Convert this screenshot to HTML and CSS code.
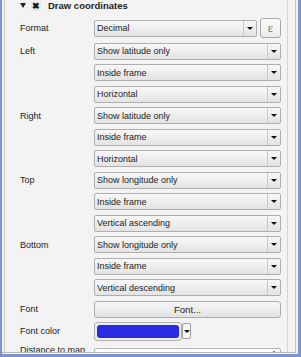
FILE: index.html
```html
<!DOCTYPE html>
<html lang="en">
<head>
    <meta charset="UTF-8">
    <title>Draw coordinates</title>
    <link rel="stylesheet" href="styles.css">
</head>
<body>
    <div class="window">
        <div class="viewport">
            <div class="group">
                <div class="group-header">
                    <span class="collapse-arrow"></span>
                    <span class="check">&#10006;</span>
                    <span class="group-title">Draw coordinates</span>
                </div>

                <div class="rows">
                    <label class="field-label">Format</label>
                    <div class="format-line">
                        <div class="combo short"><span class="combo-text">Decimal</span><span class="combo-arrow"></span></div>
                        <button class="expr-btn">ε</button>
                    </div>

                    <label class="field-label">Left</label>
                    <div class="combo"><span class="combo-text">Show latitude only</span><span class="combo-arrow"></span></div>
                    <span></span>
                    <div class="combo"><span class="combo-text">Inside frame</span><span class="combo-arrow"></span></div>
                    <span></span>
                    <div class="combo"><span class="combo-text">Horizontal</span><span class="combo-arrow"></span></div>

                    <label class="field-label">Right</label>
                    <div class="combo"><span class="combo-text">Show latitude only</span><span class="combo-arrow"></span></div>
                    <span></span>
                    <div class="combo"><span class="combo-text">Inside frame</span><span class="combo-arrow"></span></div>
                    <span></span>
                    <div class="combo"><span class="combo-text">Horizontal</span><span class="combo-arrow"></span></div>

                    <label class="field-label">Top</label>
                    <div class="combo"><span class="combo-text">Show longitude only</span><span class="combo-arrow"></span></div>
                    <span></span>
                    <div class="combo"><span class="combo-text">Inside frame</span><span class="combo-arrow"></span></div>
                    <span></span>
                    <div class="combo"><span class="combo-text">Vertical ascending</span><span class="combo-arrow"></span></div>

                    <label class="field-label">Bottom</label>
                    <div class="combo"><span class="combo-text">Show longitude only</span><span class="combo-arrow"></span></div>
                    <span></span>
                    <div class="combo"><span class="combo-text">Inside frame</span><span class="combo-arrow"></span></div>
                    <span></span>
                    <div class="combo"><span class="combo-text">Vertical descending</span><span class="combo-arrow"></span></div>

                    <label class="field-label">Font</label>
                    <button class="font-btn">Font...</button>

                    <label class="field-label">Font color</label>
                    <div class="color-line">
                        <div class="color-btn"><span class="swatch"></span></div>
                        <div class="color-drop"><span class="small-arrow"></span></div>
                    </div>

                    <label class="field-label last-label">Distance to map</label>
                    <div class="spinbox"><span class="spin-up"></span></div>
                </div>
            </div>
        </div>
    </div>
</body>
</html>
```

FILE: styles.css
```css
body {
    margin: 0;
    background: #f3f3f3;
    font-family: "Liberation Sans", Arial, sans-serif;
    font-size: 9px;
    color: #222;
}

.window {
    width: 301px;
    height: 357px;
    box-sizing: border-box;
    border: 2px solid #7896c8;
    border-top: none;
    border-right-width: 3px;
    border-bottom-width: 3px;
    background: #f3f3f3;
    overflow: hidden;
}

.viewport {
    width: 294px;
    height: 353px;
    box-sizing: border-box;
    border-right: 1px solid #c4c4c4;
    border-bottom: 1px solid #b8b8b8;
    overflow: hidden;
}

.group {
    margin-left: 2px;
    width: 284px;
    box-sizing: border-box;
    border-left: 1px solid #cacaca;
    border-right: 1px solid #d4d4d4;
    padding: 0 6px 20px 15px;
    min-height: 360px;
}

.group-header {
    display: flex;
    align-items: center;
    height: 11px;
}

.collapse-arrow {
    width: 0;
    height: 0;
    border-left: 3px solid transparent;
    border-right: 3px solid transparent;
    border-top: 5px solid #222;
    margin-right: 5px;
}

.check {
    width: 10px;
    height: 10px;
    display: flex;
    align-items: center;
    justify-content: center;
    font-size: 9px;
    font-weight: bold;
    color: #111;
    background: #e8e8e8;
    margin-right: 7px;
}

.group-title {
    font-weight: bold;
    font-size: 9.5px;
    color: #1e1e1e;
}

.rows {
    display: grid;
    grid-template-columns: 74px 187px;
    row-gap: 4.5px;
    align-items: center;
    margin-top: 7px;
}

.field-label {
    font-size: 9px;
    color: #222;
}

.combo {
    display: flex;
    align-items: center;
    height: 17px;
    box-sizing: border-box;
    border: 1px solid #aeaeae;
    border-radius: 2px;
    background: linear-gradient(#f8f8f8, #e3e3e3);
}

.combo-text {
    flex: 1;
    padding-left: 2px;
    white-space: nowrap;
}

.combo-arrow {
    width: 13px;
    height: 15px;
    box-sizing: border-box;
    border-left: 1px solid #c9c9c9;
    display: flex;
    align-items: center;
    justify-content: center;
}

.combo-arrow::after,
.small-arrow {
    content: "";
    width: 0;
    height: 0;
    border-left: 3px solid transparent;
    border-right: 3px solid transparent;
    border-top: 3px solid #111;
}

.format-line {
    display: flex;
    align-items: center;
    height: 20px;
}

.combo.short {
    width: 163px;
}

.expr-btn {
    margin-left: 3px;
    width: 21px;
    height: 20px;
    padding: 0;
    border: 1px solid #a6a6a6;
    border-radius: 3px;
    background: linear-gradient(#fbfbfb, #ececec);
    font-family: "Liberation Serif", serif;
    font-size: 13px;
    color: #7a7a7a;
}

.font-btn {
    height: 17px;
    padding: 0;
    border: 1px solid #acacac;
    border-radius: 3px;
    background: linear-gradient(#f6f6f6, #e2e2e2);
    font-family: "Liberation Sans", Arial, sans-serif;
    font-size: 9.5px;
    color: #222;
}

.color-line {
    display: flex;
    align-items: center;
    height: 18.5px;
}

.color-btn {
    width: 88px;
    height: 18.5px;
    box-sizing: border-box;
    border: 1px solid #b0b0b0;
    border-radius: 3px;
    background: #ececec;
    padding: 2px;
}

.swatch {
    display: block;
    height: 100%;
    background: #2a2ae4;
    border-radius: 3px;
}

.color-drop {
    width: 9px;
    height: 16px;
    box-sizing: border-box;
    border: 1px solid #9a9a9a;
    border-radius: 2px;
    background: #f7f7f7;
    display: flex;
    align-items: center;
    justify-content: center;
}

.last-label {
    align-self: start;
    margin-top: 0;
}

.spinbox {
    margin-top: 3px;
    height: 17px;
    box-sizing: border-box;
    border: 1px solid #b4b4b4;
    border-radius: 2px;
    background: #fbfbfb;
    display: flex;
    justify-content: flex-end;
    padding: 2px 3px 0 0;
}

.spin-up {
    width: 0;
    height: 0;
    border-left: 3px solid transparent;
    border-right: 3px solid transparent;
    border-bottom: 3px solid #111;
}
```
